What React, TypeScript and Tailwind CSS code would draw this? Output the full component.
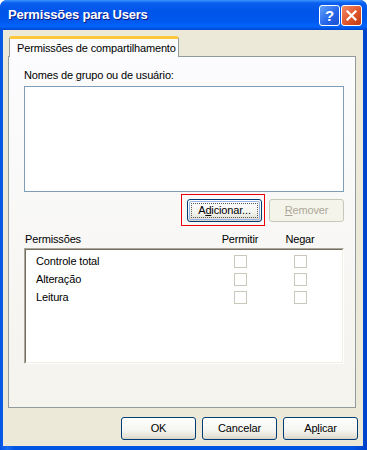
import React from 'react'

const font = { fontFamily: '"Liberation Sans", Arial, sans-serif' }

function XpButton({
    children,
    disabled,
    focused,
}: {
    children: React.ReactNode
    disabled?: boolean
    focused?: boolean
}) {
    if (disabled) {
        return (
            <div className="w-[75px] h-[23px] rounded-[3px] border border-[#c9c7ba] bg-[#f5f4ea] text-[#aca899] text-[11px] flex items-center justify-center">
                {children}
            </div>
        )
    }
    return (
        <div className="relative w-[75px] h-[23px]">
            {/* red marker drawn around the focused button */}
            {focused && (
                <div className="absolute top-[-5px] bottom-[-4px] left-[-6px] right-[-3px] border border-solid border-red-600" />
            )}
            <div className="relative w-full h-full rounded-[3px] border border-[#003c74] bg-[linear-gradient(to_bottom,#ffffff_0%,#f4f4f0_60%,#e3e1d6_90%,#d6d0c5_100%)] text-[11px] text-black flex items-center justify-center">
                {focused && (
                    <div className="absolute inset-[1px] rounded-[2px] border border-[#98b8ea]">
                        <div className="absolute inset-[1px] border border-dotted border-[#5a5a5a]" />
                    </div>
                )}
                <span className="relative">{children}</span>
            </div>
        </div>
    )
}

function Check() {
    return <div className="w-[13px] h-[13px] border border-[#cac8bb] bg-white" />
}

export default function App() {
    const perms = ['Controle total', 'Alteração', 'Leitura']

    return (
        <div className="w-[367px] h-[450px] flex flex-col rounded-t-[7px] overflow-hidden bg-[linear-gradient(to_right,#0054e3,#166aee_2%,#0054e3_4%,#0054e3_96%,#0041c8)]" style={font}>
            {/* title bar */}
            <div className="h-[30px] shrink-0 flex items-center pl-[8px] pr-[5px] bg-[linear-gradient(to_bottom,#3d95ff_0%,#0a5fef_10%,#0055ea_40%,#0058ee_70%,#0064fb_88%,#0047d0_100%)]">
                <span className="text-white font-bold text-[13px] tracking-[-0.2px] [text-shadow:1px_1px_0_#0a1883]">
                    Permissões para Users
                </span>
                <div className="ml-auto flex gap-[1px]">
                    <div className="w-[21px] h-[21px] rounded-[3px] border border-white bg-[linear-gradient(to_bottom_right,#5fa2fb,#2563e8_60%,#1a4fd0)] flex items-center justify-center text-white font-bold text-[15px] leading-none">
                        ?
                    </div>
                    <div className="w-[21px] h-[21px] rounded-[3px] border border-white bg-[linear-gradient(to_bottom_right,#ef8a6a,#e0552b_55%,#c23b10)] flex items-center justify-center">
                        <svg width="11" height="11" viewBox="0 0 11 11">
                            <path d="M1.5 1.5 L9.5 9.5 M9.5 1.5 L1.5 9.5" stroke="white" strokeWidth="2.2" strokeLinecap="square" />
                        </svg>
                    </div>
                </div>
            </div>

            {/* body */}
            <div className="flex-1 ml-[3px] mr-[4px] mb-[4px] bg-[#ece9d8] flex flex-col pt-[6px] tracking-[-0.15px]">
                {/* tab strip */}
                <div className="flex ml-[6px] h-[20px]">
                    <div className="relative z-10 w-[170px] h-[21px] -mb-[1px] bg-[#fcfcfe] border-x border-[#919b9c] rounded-t-[3px] border-t-[3px] border-t-[#ffc83c] flex items-center pl-[7px] text-[11px] text-black whitespace-nowrap overflow-hidden">
                        Permissões de compartilhamento
                    </div>
                </div>

                {/* tab panel */}
                <div className="ml-[5px] w-[348px] h-[352px] border border-[#919b9c] bg-[linear-gradient(to_bottom,#fcfcfe,#f4f3ee)] pl-[15px] text-[11px] text-black">
                    <div className="mt-[12px] h-[13px] leading-[13px]">
                        Nomes de <u>g</u>rupo ou de usuário:
                    </div>
                    <div className="mt-[4px] w-[320px] h-[106px] border border-[#7f9db9] bg-white" />

                    <div className="mt-[7px] w-[320px] flex justify-end gap-[7px]">
                        <XpButton focused>
                            A<u>d</u>icionar...
                        </XpButton>
                        <XpButton disabled>
                            <u>R</u>emover
                        </XpButton>
                    </div>

                    <div className="mt-[11px] w-[320px] h-[13px] leading-[13px] flex">
                        <span className="flex-1 pl-[1px]">Permissões</span>
                        <span className="w-[60px] text-center">Permitir</span>
                        <span className="w-[60px] text-center">Negar</span>
                        <span className="w-[14px]" />
                    </div>

                    <div className="mt-[2px] w-[320px] h-[116px] border-t border-l border-[#aca899] border-b border-r border-b-white border-r-white">
                        <div className="w-full h-full border-t border-l border-[#716f64] border-b border-r border-b-[#f1efe2] border-r-[#f1efe2] bg-white pt-[2px]">
                            {perms.map(p => (
                                <div key={p} className="h-[18px] flex items-center">
                                    <span className="flex-1 pl-[10px]">{p}</span>
                                    <div className="w-[60px] flex justify-center">
                                        <Check />
                                    </div>
                                    <div className="w-[60px] flex justify-center">
                                        <Check />
                                    </div>
                                    <span className="w-[12px]" />
                                </div>
                            ))}
                        </div>
                    </div>
                </div>

                {/* dialog buttons */}
                <div className="mt-[9px] flex justify-end gap-[6px] pr-[5px]">
                    <XpButton>OK</XpButton>
                    <XpButton>Cancelar</XpButton>
                    <XpButton>
                        Ap<u>l</u>icar
                    </XpButton>
                </div>
            </div>
        </div>
    )
}
